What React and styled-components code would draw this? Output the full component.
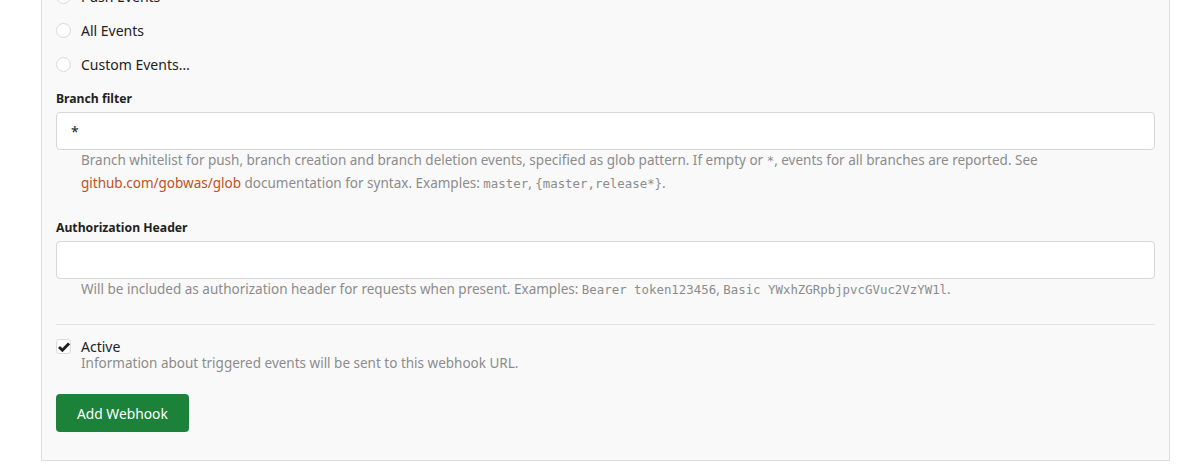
import React from 'react';
import styled, { createGlobalStyle } from 'styled-components';

const GlobalStyle = createGlobalStyle`
  html, body {
    margin: 0;
    padding: 0;
    background: #fff;
    overflow: hidden;
  }
  body {
    font-family: "Noto Sans", "Open Sans", sans-serif;
    font-size: 14px;
    color: #222;
  }
`;

const Panel = styled.div`
  box-sizing: border-box;
  width: 1129px;
  margin: -14px 0 0 41px;
  padding: 0 14px 28px;
  background: #f9f9f9;
  border: 1px solid #dedede;
  border-top: none;
`;

const RadioList = styled.div`
  display: flex;
  flex-direction: column;
  gap: 14px;
`;

const RadioRow = styled.label`
  display: flex;
  align-items: center;
  gap: 10px;
  height: 20px;
  font-size: 14px;
  color: #222;
`;

const Radio = styled.span`
  box-sizing: border-box;
  width: 15px;
  height: 15px;
  border-radius: 50%;
  border: 1px solid #d9d9d9;
  background: #fff;
  flex: none;
`;

const Field = styled.div`
  margin-top: ${p => p.$top}px;
`;

const Label = styled.div`
  font-size: 12.2px;
  font-weight: 700;
  line-height: 18px;
  padding-top: 1px;
  color: #222;
  margin-bottom: 4px;
`;

const Input = styled.div`
  box-sizing: border-box;
  height: 38px;
  background: #fff;
  border: 1px solid #d7d7d7;
  border-radius: 4px;
  padding: 0 14px;
  display: flex;
  align-items: center;
  font-size: 14px;
  color: #222;
`;

const Help = styled.div`
  margin-top: -1px;
  padding-left: 25px;
  font-size: 13.5px;
  line-height: 23px;
  color: #8c8c8c;
`;

const Code = styled.code`
  font-family: "DejaVu Sans Mono", "Liberation Mono", monospace;
  font-size: 12.4px;
  color: #8c8c8c;
`;

const Link = styled.a`
  color: #c2501a;
  text-decoration: none;
`;

const Divider = styled.hr`
  border: none;
  border-top: 1px solid #e2e2e2;
  margin: 23px 0 0;
`;

const CheckRow = styled.div`
  display: grid;
  grid-template-columns: 15px 1fr;
  column-gap: 10px;
  margin-top: 13px;
`;

const Checkbox = styled.span`
  box-sizing: border-box;
  width: 15px;
  height: 15px;
  margin-top: 1px;
  border: 1px solid #dcdcdc;
  border-radius: 3px;
  background: #fff;
  display: flex;
  align-items: center;
  justify-content: center;
`;

const CheckTitle = styled.div`
  font-size: 14px;
  line-height: 17px;
  color: #222;
`;

const CheckDesc = styled.div`
  grid-column: 2;
  font-size: 13.5px;
  line-height: 17px;
  color: #8c8c8c;
`;

const Button = styled.button`
  margin-top: 22px;
  height: 38px;
  padding: 0 21px;
  border: none;
  border-radius: 4px;
  background: #1c8139;
  color: #fff;
  font-family: inherit;
  font-size: 13.8px;
`;

const App = () => {
  return (
    <>
      <GlobalStyle />
      <Panel>
        <RadioList>
          <RadioRow><Radio />Push Events</RadioRow>
          <RadioRow><Radio />All Events</RadioRow>
          <RadioRow><Radio />Custom Events…</RadioRow>
        </RadioList>

        <Field $top={15}>
          <Label>Branch filter</Label>
          <Input>*</Input>
          <Help>
            Branch whitelist for push, branch creation and branch deletion events, specified as glob pattern. If empty or <Code>*</Code>, events for all branches are reported. See{' '}
            <Link href="#">github.com/gobwas/glob</Link> documentation for syntax. Examples: <Code>master</Code>, <Code>{'{master,release*}'}</Code>.
          </Help>
        </Field>

        <Field $top={23}>
          <Label>Authorization Header</Label>
          <Input />
          <Help>
            Will be included as authorization header for requests when present. Examples: <Code>Bearer token123456</Code>, <Code>Basic YWxhZGRpbjpvcGVuc2VzYW1l</Code>.
          </Help>
        </Field>

        <Divider />

        <CheckRow>
          <Checkbox>
            <svg width="12" height="10" viewBox="0 0 12 10">
              <path d="M1 5 L4.4 8.2 L11 1.4" fill="none" stroke="#1e1e1e" strokeWidth="2.9" />
            </svg>
          </Checkbox>
          <CheckTitle>Active</CheckTitle>
          <CheckDesc>Information about triggered events will be sent to this webhook URL.</CheckDesc>
        </CheckRow>

        <Button>Add Webhook</Button>
      </Panel>
    </>
  );
};

export default App;
